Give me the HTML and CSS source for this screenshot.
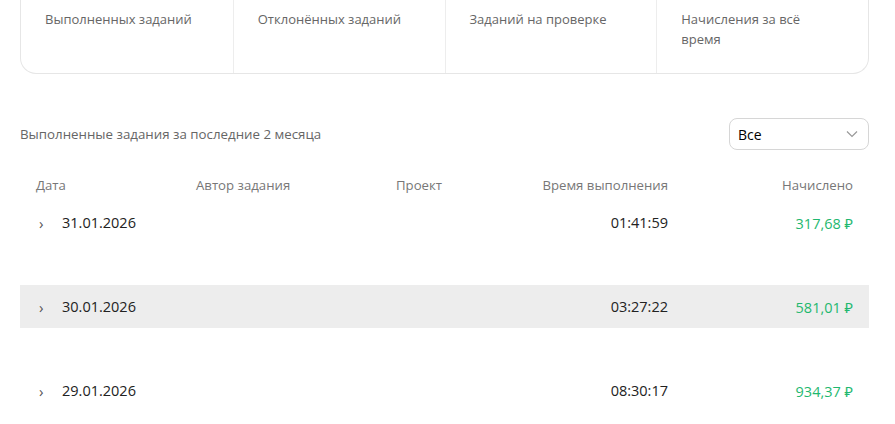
FILE: index.html
```html
<!DOCTYPE html>
<html>

<head>
    <title>Задания</title>
    <link rel="stylesheet" href="styles.css">
</head>

<body>
    <div class="page">
        <div class="stats">
            <div class="stat-cell">Выполненных заданий</div>
            <div class="stat-cell">Отклонённых заданий</div>
            <div class="stat-cell">Заданий на проверке</div>
            <div class="stat-cell">Начисления за всё время</div>
        </div>

        <div class="history-head">
            <div class="history-title">Выполненные задания за последние 2 месяца</div>
            <div class="select">
                <span>Все</span>
                <svg width="12" height="8" viewBox="0 0 12 8">
                    <path d="M1 1.5l5 5 5-5" fill="none" stroke="#999" stroke-width="1.2"/>
                </svg>
            </div>
        </div>

        <div class="table">
            <div class="table-row table-header">
                <div>Дата</div>
                <div>Автор задания</div>
                <div>Проект</div>
                <div class="right">Время выполнения</div>
                <div class="right">Начислено</div>
            </div>

            <div class="table-row">
                <div class="date"><span class="arrow">›</span>31.01.2026</div>
                <div></div>
                <div></div>
                <div class="right">01:41:59</div>
                <div class="right money">317,68 ₽</div>
            </div>
            <div class="row-space"></div>

            <div class="table-row active">
                <div class="date"><span class="arrow">›</span>30.01.2026</div>
                <div></div>
                <div></div>
                <div class="right">03:27:22</div>
                <div class="right money">581,01 ₽</div>
            </div>
            <div class="row-space"></div>

            <div class="table-row">
                <div class="date"><span class="arrow">›</span>29.01.2026</div>
                <div></div>
                <div></div>
                <div class="right">08:30:17</div>
                <div class="right money">934,37 ₽</div>
            </div>
        </div>
    </div>
</body>

</html>
```

FILE: styles.css
```css
body {
    margin: 0;
    font-family: "Open Sans", "Noto Sans", sans-serif;
    color: #222;
    background: #fff;
    overflow: hidden;
}

.page {
    padding: 0 26px 0 20px;
}

.stats {
    display: grid;
    grid-template-columns: repeat(4, 1fr);
    border: 1px solid #e6e6e6;
    border-radius: 0 0 16px 16px;
    border-top: none;
    height: 74px;
    box-sizing: border-box;
}

.stat-cell {
    padding: 9px 40px 0 24px;
    font-size: 13px;
    line-height: 20px;
    color: #666;
    border-left: 1px solid #ededed;
}

.stat-cell:first-child {
    border-left: none;
}

.history-head {
    display: flex;
    justify-content: space-between;
    align-items: center;
    margin-top: 44px;
}

.history-title {
    font-size: 13.3px;
    color: #666;
}

.select {
    width: 140px;
    height: 32px;
    box-sizing: border-box;
    border: 1px solid #d6d6d6;
    border-radius: 8px;
    display: flex;
    align-items: center;
    justify-content: space-between;
    padding: 0 10px 0 8px;
    font-size: 14px;
    color: #000;
}

.table {
    margin-top: 19px;
}

.table-row {
    display: grid;
    grid-template-columns: 160px 200px 92px 180px 1fr;
    padding: 0 16px;
    height: 43px;
    align-items: center;
    font-size: 14.5px;
}

.table-header {
    height: 32px;
    font-size: 13.2px;
    color: #777;
}

.row-space {
    height: 41px;
}

.active {
    background: #ededed;
}

.right {
    text-align: right;
}

.date {
    display: flex;
    align-items: center;
}

.arrow {
    width: 26px;
    font-size: 15px;
    color: #555;
    padding-left: 3px;
    box-sizing: border-box;
}

.money {
    color: #1fb86f;
}
```
